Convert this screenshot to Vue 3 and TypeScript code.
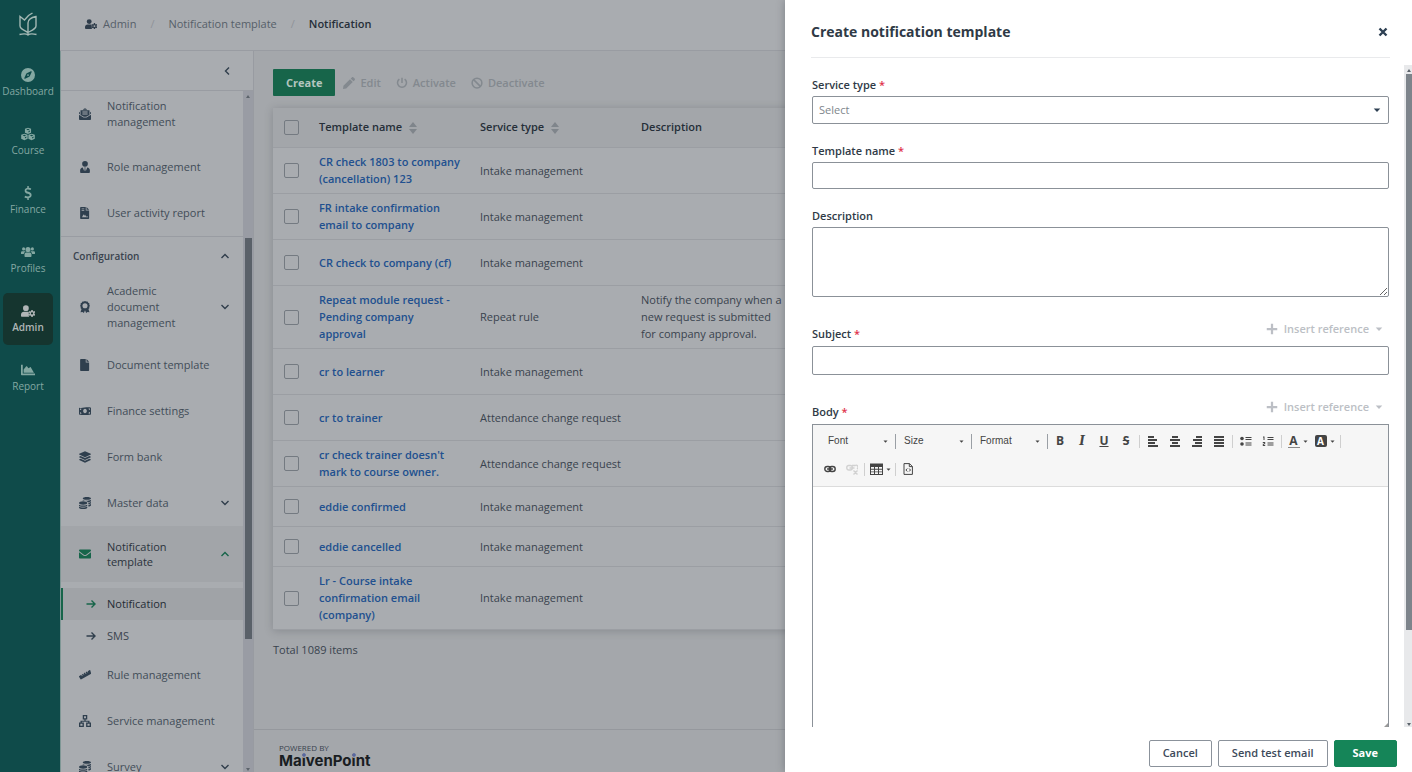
<script setup lang="ts">
import { ref } from 'vue'

interface NavItem {
  label: string
  icon: string
  chevron?: 'up' | 'down'
  kind?: string
}

const icons: Record<string, string> = {
  compass:
    'M8 0a8 8 0 1 0 0 16A8 8 0 0 0 8 0zM12.2 4.7 10 9.4a1.2 1.2 0 0 1-.6.6l-4.7 2.2c-.6.2-1.1-.3-.9-.9L6 6.600a1.200 1.200 0 0 1 .6-.6l4.700-2.200c.6-.2 1.100.3.9.9zM8 7a1 1 0 1 0 0 2 1 1 0 0 0 0-2z',
  cubes:
    'M8 .8 11.500 2v4.500L8 8 4.500 6.500V2zM8 2 6 2.800l2 .8 2-.8zM8.600 4.700v1.500l1.500-.7V4zM3.900 7.600l3.700 1.300v4.500l-3.700 1.700L.2 13.400V8.900zM3.900 8.900l-2 .8 2 .8 2-.8zM4.500 11.600v1.500l1.600-.7v-1.500zM12.100 7.600l3.700 1.300v4.500l-3.700 1.700-3.700-1.700V8.900zM12.100 8.900l-2 .8 2 .8 2-.8zM12.700 11.600v1.500l1.600-.7v-1.500z',
  dollar:
    'M7.200 0h1.700v2c1 .1 2 .4 2.800.8l-.7 1.900c-1-.5-2-.8-3-.8-1.200 0-1.800.4-1.800 1.100 0 .8.8 1.100 2.300 1.600 2.200.7 3.600 1.600 3.600 3.600 0 1.900-1.200 3.200-3.200 3.600V16H7.200v-2.100c-1.200-.1-2.400-.4-3.300-.9l.8-2c1 .6 2.200.9 3.300.9 1.300 0 2-.5 2-1.300 0-.8-.7-1.200-2.200-1.700C5.700 8.200 4.200 7.300 4.200 5.300c0-1.700 1.200-2.900 3-3.300z',
  users:
    'M3 2.700a1.800 1.800 0 1 1 0 3.600 1.800 1.800 0 0 1 0-3.600zM13 2.700a1.800 1.800 0 1 1 0 3.600 1.800 1.800 0 0 1 0-3.600zM8 2.200a2.900 2.900 0 1 1 0 5.800 2.900 2.900 0 0 1 0-5.800zM1.500 7h2.700c.5 0 .9.2 1.100.5-1.200.7-1.900 1.500-2.100 2.900H.6a.6.6 0 0 1-.6-.6V8.500C0 7.600.7 7 1.500 7zM11.800 7h2.700c.8 0 1.500.6 1.500 1.500v1.300c0 .4-.3.6-.6.6h-2.600c-.2-1.400-.9-2.200-2.100-2.900.2-.3.600-.5 1.100-.5zM6 8.600h4c1.200 0 2 1.100 2 2.300v1.600c0 .7-.5 1.200-1.200 1.200H5.200c-.7 0-1.200-.5-1.200-1.200v-1.600c0-1.200.8-2.300 2-2.300z',
  userCog:
    'M5.600 1.500a3.300 3.300 0 1 1 0 6.600 3.300 3.300 0 0 1 0-6.600zM3.400 8.800h4.200c.6 0 1 .1 1.400.3-.5.9-.4 1.700.2 2.400-.5.9-.4 1.900.2 3H1.200c-.7 0-1.200-.5-1.200-1.200v-1.100c0-1.900 1.500-3.400 3.400-3.400zM11.800 6.800h1.600l.2 1.200.8.500 1.200-.4.8 1.400-1 .8v1l1 .8-.8 1.400-1.200-.4-.8.500-.2 1.200h-1.600l-.2-1.200-.8-.5-1.200.4-.8-1.400 1-.8v-1l-1-.8.8-1.400 1.200.4.8-.5zM12.600 9.500a1.300 1.300 0 1 0 0 2.600 1.300 1.300 0 0 0 0-2.600z',
  chart:
    'M0 2h2v10h14v2H.8a.8.8 0 0 1-.8-.8zM3 11V7.500l3-3.700c.2-.3.600-.3.800 0L8.500 6l2-1.200c.3-.2.600-.1.800.2L14.800 11z',
  mailOpen:
    'M5 2.200 7 .5h2l2 1.700zM2 3h12v6.200L9.500 11.800h-3L2 9.200zM4.500 4.700V6h7V4.700zM4.500 7.300v1.300h7V7.300zM1.200 5v3.300L0 7.600V6zM14.800 5v3.300l1.200-.7V6zM0 9l6 3.700h4L16 9v5.500c0 .8-.7 1.500-1.500 1.500h-13C.7 16 0 15.300 0 14.500z',
  userTie:
    'M8 0a3.800 3.800 0 1 1 0 7.600A3.800 3.800 0 0 1 8 0zM5 8.500l2 5L7.700 10 7 8.500h2L8.300 10l.7 3.500 2-5c2 .2 3.500 1.700 3.500 3.700v2.300c0 .8-.6 1.500-1.500 1.500H3c-.8 0-1.500-.7-1.500-1.500v-2.300c0-2 1.500-3.500 3.500-3.700z',
  report:
    'M2.500 0H9v4.500h4.500V15c0 .6-.4 1-1 1h-10a1 1 0 0 1-1-1V1c0-.6.4-1 1-1zM10 0l3.500 3.500H10zM3.500 2v1H7V2zM3.500 4v1H7V4zM4 13.500h8v-1H9.500L8 10l-1 1.500-1-2z',
  award:
    'M8 0l1.600.8 1.800-.1.900 1.500 1.500.9-.1 1.700.8 1.600-.8 1.600.1 1.700-1.200.8L14 15l-2.700-.4L9.500 16 8 12.300 6.500 16l-1.800-1.400L2 15l1.400-4.500-1.200-.8.100-1.700-.8-1.600.8-1.600-.1-1.700 1.500-.9.900-1.500 1.800.1zM8 3a3.400 3.400 0 1 0 0 6.800A3.400 3.400 0 0 0 8 3z',
  file: 'M2.500 0H9v4.500h4.500V15c0 .6-.4 1-1 1h-10a1 1 0 0 1-1-1V1c0-.6.4-1 1-1zM10 0l3.500 3.500H10z',
  money:
    'M0 3.500c4 1.500 10-1.500 16 0v9c-5 1-12 1-16 0zM8 5c-1.400 0-2.500 1.400-2.500 3S6.600 11 8 11s2.500-1.400 2.500-3S9.400 5 8 5zM1.300 4.800v2c1 0 2-.8 2-1.800zM14.700 4.500v2c-1 0-2-.8-2-1.800zM1.300 11.800V9.600c1 0 2 .8 2 1.900zM14.700 11.500V9.300c-1 0-2 .8-2 1.900z',
  layers:
    'M8 .3l7.700 3.500c.4.200.4.700 0 .9L8 8.200.3 4.700c-.4-.2-.4-.7 0-.9zM2 6.700l6 2.700 6-2.700 1.700.8c.4.200.4.700 0 .9L8 11.900.3 8.400c-.4-.2-.4-.7 0-.9zM2 10.400l6 2.700 6-2.700 1.700.8c.4.200.4.700 0 .9L8 15.700.3 12.100c-.4-.2-.4-.7 0-.9z',
  coins:
    'M10.500 0C13.500 0 16 .8 16 1.900s-2.500 1.900-5.500 1.900S5 3 5 1.900 7.500 0 10.500 0zM5 4c2 1.300 8 1.300 11 0v1.300c0 .8-1.600 1.500-4 1.700C10.500 5.400 8 4.800 5 5zM5.500 5.800c3 0 5.500 1 5.500 2.300s-2.500 2.300-5.500 2.300S0 9.400 0 8.100s2.500-2.300 5.500-2.300zM0 10.200c2 1.500 8.500 1.500 11 0v1.300c0 .9-2.500 1.600-5.500 1.600S0 12.400 0 11.500zM0 13c2 1.400 8.500 1.400 11 0v1.200c0 1-2.500 1.800-5.500 1.800S0 15.200 0 14.200zM12.500 7.700C14 7.500 15 7.200 16 6.600v1.500c0 .7-1.300 1.300-3.500 1.600zM12.500 10.500c1.500-.2 2.500-.5 3.500-1.100v1.500c0 .8-1.300 1.500-3.500 1.800z',
  mail: 'M1.500 2h13c.8 0 1.500.7 1.500 1.500v.6L9.500 9c-.9.700-2.100.7-3 0L0 4.100v-.6C0 2.700.7 2 1.500 2zM0 5.600l5.700 4.300c1.400 1 3.200 1 4.600 0L16 5.600v6.900c0 .8-.7 1.500-1.500 1.500h-13C.7 14 0 13.300 0 12.500z',
  ruler:
    'M0 9.500l3-1.700 1 1.700.8-.5-1-1.700 1.700-1 .8 1.300.8-.4-.8-1.400 1.700-1 1 1.700.9-.5-1-1.700 1.700-1 .8 1.400.9-.5-.8-1.300 2.400-1.400c.4-.2.900-.1 1.100.3L16 5.400c.2.400.1.900-.3 1.100L3.200 13.800c-.4.200-.9.100-1.100-.3L0 10.300z',
  sitemap:
    'M5 0h6v6H8.800v1.500H14V10h2v6H9.500v-6h2.700V9H3.800v1h2.700v6H0v-6h2V7.500h5.200V6H5zM6.700 1.700v2.600h2.600V1.700zM1.800 11.700v2.600h2.900v-2.600zM11.300 11.700v2.600h2.900v-2.600z',
  pencil:
    'M0 16l.6-4.300L9.300 3l3.700 3.700-8.700 8.700zM10.200 2.100 11.800.5c.6-.6 1.500-.6 2.100 0l1.600 1.600c.6.6.6 1.500 0 2.100l-1.600 1.600z',
  plus: 'M6.500 1h3v5.500H15v3H9.500V15h-3V9.500H1v-3h5.500z',
  caret: 'M1.500 5h13L8 12z',
}

const rail = [
  { label: 'Dashboard', icon: 'compass' },
  { label: 'Course', icon: 'cubes' },
  { label: 'Finance', icon: 'dollar' },
  { label: 'Profiles', icon: 'users' },
  { label: 'Admin', icon: 'userCog' },
  { label: 'Report', icon: 'chart' },
]

const topNav: NavItem[] = [
  { label: 'Notification management', icon: 'mailOpen', kind: 'first' },
  { label: 'Role management', icon: 'userTie' },
  { label: 'User activity report', icon: 'report' },
]

const configNav: NavItem[] = [
  { label: 'Academic document management', icon: 'award', chevron: 'down', kind: 'tall' },
  { label: 'Document template', icon: 'file' },
  { label: 'Finance settings', icon: 'money' },
  { label: 'Form bank', icon: 'layers' },
  { label: 'Master data', icon: 'coins', chevron: 'down' },
  { label: 'Notification template', icon: 'mail', chevron: 'up', kind: 'open' },
]

const lowerNav: NavItem[] = [
  { label: 'Rule management', icon: 'ruler' },
  { label: 'Service management', icon: 'sitemap' },
  { label: 'Survey', icon: 'coins', chevron: 'down' },
]

const rows = [
  { name: 'CR check 1803 to company (cancellation) 123', type: 'Intake management', desc: '' },
  { name: 'FR intake confirmation email to company', type: 'Intake management', desc: '' },
  { name: 'CR check to company (cf)', type: 'Intake management', desc: '' },
  {
    name: 'Repeat module request - Pending company approval',
    type: 'Repeat rule',
    desc: 'Notify the company when a new request is submitted for company approval.',
  },
  { name: 'cr to learner', type: 'Intake management', desc: '' },
  { name: 'cr to trainer', type: 'Attendance change request', desc: '' },
  { name: "cr check trainer doesn't mark to course owner.", type: 'Attendance change request', desc: '' },
  { name: 'eddie confirmed', type: 'Intake management', desc: '', short: true },
  { name: 'eddie cancelled', type: 'Intake management', desc: '', short: true },
  { name: 'Lr - Course intake confirmation email (company)', type: 'Intake management', desc: '' },
]

const combos = ['Font', 'Size', 'Format']
const aligns = [
  { label: 'Align left', d: 'M1 1h6v2H1zM1 4h9v2H1zM1 7h7v2H1zM1 10h10v2H1z' },
  { label: 'Center', d: 'M3 1h6v2H3zM1 4h10v2H1zM3 7h6v2H3zM1 10h10v2H1z' },
  { label: 'Align right', d: 'M5 1h6v2H5zM2 4h9v2H2zM4 7h7v2H4zM1 10h10v2H1z' },
  { label: 'Justify', d: 'M1 1h10v2H1zM1 4h10v2H1zM1 7h10v2H1zM1 10h10v2H1z' },
]

const templateName = ref('')
const description = ref('')
const subject = ref('')
const body = ref('')
</script>

<template>
  <div class="app">
    <nav class="rail" aria-label="Modules">
      <svg class="brand" viewBox="0 0 20 24" aria-hidden="true">
        <path d="M10 22.500V11c0-3 3-5.500 8-6.500V14c0 2.500-2.500 3.500-8 6.500M10 20.500c-5-2.500-8-4-8-6.500V4.500l4.500 3.500 4-4.500L14.500 1M1.500 22.500c4-1 7-.8 8.500.5 1.500-1.300 4.500-1.500 8.500-.5" />
      </svg>
      <a v-for="r in rail" :key="r.label" href="#" class="tile" :class="{ on: r.label === 'Admin' }">
        <svg viewBox="0 0 16 16" aria-hidden="true"><path :d="icons[r.icon]" fill-rule="evenodd" /></svg>
        <span>{{ r.label }}</span>
      </a>
    </nav>

    <div class="page">
      <header class="crumbs">
        <a href="#" class="crumb">
          <svg viewBox="0 0 16 16" aria-hidden="true"><path :d="icons.userCog" fill-rule="evenodd" /></svg>Admin
        </a>
        <span class="slash">/</span>
        <a href="#" class="crumb">Notification template</a>
        <span class="slash">/</span>
        <b>Notification</b>
      </header>

      <div class="columns">
        <aside class="side">
          <div class="side-head">
            <button type="button" class="bare" aria-label="Collapse menu">
              <svg class="chev left" viewBox="0 0 10 10"><path d="M1.500 3 5 6.500 8.500 3" /></svg>
            </button>
          </div>
          <div class="side-body">
            <nav class="menu" aria-label="Admin menu">
              <a v-for="n in topNav" :key="n.label" href="#" class="item" :class="n.kind">
                <svg class="ico" viewBox="0 0 16 16"><path :d="icons[n.icon]" fill-rule="evenodd" /></svg>
                <span>{{ n.label }}</span>
              </a>
              <button type="button" class="group">
                <span>Configuration</span>
                <svg class="chev up" viewBox="0 0 10 10"><path d="M1.500 3 5 6.500 8.500 3" /></svg>
              </button>
              <a v-for="n in configNav" :key="n.label" href="#" class="item" :class="n.kind">
                <svg class="ico" viewBox="0 0 16 16"><path :d="icons[n.icon]" fill-rule="evenodd" /></svg>
                <span>{{ n.label }}</span>
                <svg v-if="n.chevron" class="chev" :class="n.chevron" viewBox="0 0 10 10"><path d="M1.500 3 5 6.500 8.500 3" /></svg>
              </a>
              <div class="subs">
                <a v-for="s in ['Notification', 'SMS']" :key="s" href="#" class="sub" :class="{ on: s === 'Notification' }">
                  <svg viewBox="0 0 10 10"><path d="M.5 5h8.500M5.500 1.500 9 5 5.500 8.500" /></svg>{{ s }}
                </a>
              </div>
              <a v-for="n in lowerNav" :key="n.label" href="#" class="item">
                <svg class="ico" viewBox="0 0 16 16"><path :d="icons[n.icon]" fill-rule="evenodd" /></svg>
                <span>{{ n.label }}</span>
                <svg v-if="n.chevron" class="chev" :class="n.chevron" viewBox="0 0 10 10"><path d="M1.500 3 5 6.500 8.500 3" /></svg>
              </a>
            </nav>
            <div class="track" aria-hidden="true">
              <i class="arrow up"></i>
              <i class="thumb"></i>
              <i class="arrow down"></i>
            </div>
          </div>
        </aside>

        <main class="main">
          <div class="content">
            <div class="actions">
              <button type="button" class="create">Create</button>
              <button type="button" class="ghost" disabled>
                <svg viewBox="0 0 16 16"><path :d="icons.pencil" /></svg>Edit
              </button>
              <button type="button" class="ghost" disabled>
                <svg class="line" viewBox="0 0 16 16"><path d="M8 1v7M4.500 2.800a6 6 0 1 0 7 0" /></svg>Activate
              </button>
              <button type="button" class="ghost" disabled>
                <svg class="line" viewBox="0 0 16 16"><circle cx="8" cy="8" r="6.500" /><path d="M3.500 3.500l9 9" /></svg>Deactivate
              </button>
            </div>

            <table class="grid">
              <colgroup>
                <col class="c-check" />
                <col class="c-text" />
                <col class="c-text" />
                <col class="c-text" />
                <col />
              </colgroup>
              <thead>
                <tr>
                  <th class="pick"><input type="checkbox" aria-label="Select all" /></th>
                  <th>
                    Template name
                    <svg class="sort" viewBox="0 0 8 12"><path d="M0 5h8L4 0zM0 7h8l-4 5z" /></svg>
                  </th>
                  <th>
                    Service type
                    <svg class="sort" viewBox="0 0 8 12"><path d="M0 5h8L4 0zM0 7h8l-4 5z" /></svg>
                  </th>
                  <th>Description</th>
                  <th></th>
                </tr>
              </thead>
              <tbody>
                <tr v-for="r in rows" :key="r.name" :class="{ short: r.short }">
                  <td class="pick"><input type="checkbox" :aria-label="r.name" /></td>
                  <td><a href="#">{{ r.name }}</a></td>
                  <td>{{ r.type }}</td>
                  <td>{{ r.desc }}</td>
                  <td></td>
                </tr>
              </tbody>
            </table>
            <p class="total">Total 1089 items</p>
          </div>
          <footer class="foot">
            <small>POWERED BY</small>
            <strong>Ma<span>i</span>venPo<span>i</span>nt</strong>
          </footer>
        </main>
      </div>
    </div>

    <section class="drawer" role="dialog" aria-labelledby="dlg-title">
      <header class="d-head">
        <h1 id="dlg-title">Create notification template</h1>
        <button type="button" class="bare" aria-label="Close">
          <svg class="close" viewBox="0 0 10 10"><path d="M1.500 1.500l7 7M8.500 1.500l-7 7" /></svg>
        </button>
      </header>

      <div class="d-body">
        <form class="form">
          <div class="field">
            <label for="f-type">Service type <em>*</em></label>
            <div class="select">
              <select id="f-type"><option>Select</option></select>
              <svg viewBox="0 0 16 16"><path :d="icons.caret" /></svg>
            </div>
          </div>
          <div class="field">
            <label for="f-name">Template name <em>*</em></label>
            <input id="f-name" v-model="templateName" type="text" />
          </div>
          <div class="field">
            <label for="f-desc">Description</label>
            <textarea id="f-desc" v-model="description" class="desc"></textarea>
          </div>
          <div class="field wide">
            <div class="pair">
              <label for="f-subject">Subject <em>*</em></label>
              <button type="button" class="insert" disabled>
                <svg class="plus" viewBox="0 0 16 16"><path :d="icons.plus" /></svg>Insert reference
                <svg class="tri" viewBox="0 0 16 16"><path :d="icons.caret" /></svg>
              </button>
            </div>
            <input id="f-subject" v-model="subject" class="big" type="text" />
          </div>
          <div class="field wide grow">
            <div class="pair">
              <label for="f-body">Body <em>*</em></label>
              <button type="button" class="insert" disabled>
                <svg class="plus" viewBox="0 0 16 16"><path :d="icons.plus" /></svg>Insert reference
                <svg class="tri" viewBox="0 0 16 16"><path :d="icons.caret" /></svg>
              </button>
            </div>
            <div class="editor">
              <div class="tools" role="toolbar" aria-label="Formatting">
                <div class="tool-row">
                  <div v-for="c in combos" :key="c" class="combo">
                    <select :aria-label="c"><option>{{ c }}</option></select>
                    <svg class="drop" viewBox="0 0 16 16"><path :d="icons.caret" /></svg>
                  </div>
                  <button type="button" class="tb bold">B</button>
                  <button type="button" class="tb ital">I</button>
                  <button type="button" class="tb under">U</button>
                  <button type="button" class="tb strike">S</button>
                  <i class="sep"></i>
                  <button v-for="a in aligns" :key="a.label" type="button" class="tb" :aria-label="a.label">
                    <svg class="al" viewBox="0 0 12 13"><path :d="a.d" /></svg>
                  </button>
                  <i class="sep"></i>
                  <button type="button" class="tb" aria-label="Bulleted list">
                    <svg viewBox="0 0 12 12"><circle cx="2" cy="3.500" r="1.800" /><circle cx="2" cy="9" r="1.800" /><path d="M5.500 2h6v1h-6zM5.500 4h6v1h-6zM5.500 7.500h6v1h-6zM5.500 9.500h6v1h-6z" /></svg>
                  </button>
                  <button type="button" class="tb" aria-label="Numbered list">
                    <svg viewBox="0 0 12 12"><path d="M1 1.500h1.500V5h-1V2.500H1zM.8 7h2.400v2.300H1.800v.7h1.400v1H.8V8.700h1.400V8H.8zM5.500 2h6v1h-6zM5.500 4h6v1h-6zM5.500 7.500h6v1h-6zM5.500 9.500h6v1h-6z" /></svg>
                  </button>
                  <i class="sep"></i>
                  <button type="button" class="tb with-drop" aria-label="Text colour">
                    <span class="tcol">A</span>
                    <svg class="drop" viewBox="0 0 16 16"><path :d="icons.caret" /></svg>
                  </button>
                  <button type="button" class="tb with-drop" aria-label="Background colour">
                    <span class="bcol">A</span>
                    <svg class="drop" viewBox="0 0 16 16"><path :d="icons.caret" /></svg>
                  </button>
                  <i class="sep"></i>
                </div>
                <div class="tool-row second">
                  <button type="button" class="tb" aria-label="Link">
                    <svg class="stroke thick" viewBox="0 0 12 12"><rect x=".8" y="3.500" width="6" height="5" rx="2.500" /><rect x="5.200" y="3.500" width="6" height="5" rx="2.500" /><path d="M3 6h6" /></svg>
                  </button>
                  <button type="button" class="tb" aria-label="Unlink" disabled>
                    <svg class="stroke thick" viewBox="0 0 12 12"><rect x=".8" y="2.500" width="5.500" height="4.500" rx="2" /><path d="M6 2.500h3a2 2 0 0 1 2 3.500M3.500 5h5M7.500 7.500l4 4M11.500 7.500l-4 4" /></svg>
                  </button>
                  <i class="sep"></i>
                  <button type="button" class="tb with-drop" aria-label="Table">
                    <svg class="table" viewBox="0 0 13 12"><path fill-rule="evenodd" d="M0 .5h13V12H0zM1 4v1.800h3V4zM5 4v1.800h3V4zM9 4v1.800h3V4zM1 6.700v1.700h3V6.700zM5 6.700v1.700h3V6.700zM9 6.700v1.700h3V6.700zM1 9.300V11h3V9.300zM5 9.300V11h3V9.300zM9 9.300V11h3V9.300z" /></svg>
                    <svg class="drop" viewBox="0 0 16 16"><path :d="icons.caret" /></svg>
                  </button>
                  <i class="sep"></i>
                  <button type="button" class="tb" aria-label="Source">
                    <svg class="stroke" viewBox="0 0 12 12"><path d="M2 .6h5.500L10.400 3.500v7.900H2zM7.300.6v3h3M5.300 5.500 3.900 7l1.400 1.500M7.100 5.500 8.500 7 7.100 8.500" /></svg>
                  </button>
                </div>
              </div>
              <textarea id="f-body" v-model="body" class="canvas"></textarea>
              <i class="grip"></i>
            </div>
          </div>
        </form>
        <div class="track light" aria-hidden="true">
          <i class="arrow up"></i>
          <i class="thumb"></i>
          <i class="arrow down"></i>
        </div>
      </div>

      <footer class="d-foot">
        <button type="button">Cancel</button>
        <button type="button">Send test email</button>
        <button type="button" class="save">Save</button>
      </footer>
    </section>
  </div>
</template>

<style>
body {
  margin: 0;
  overflow: hidden;
}
</style>

<style scoped>
* {
  box-sizing: border-box;
}
.app {
  position: relative;
  display: flex;
  height: 100vh;
  overflow: hidden;
  background: #a4a7ab;
  color: #39434e;
  font: 11px/16px 'Open Sans', 'Noto Sans', sans-serif;
}
a {
  color: inherit;
  text-decoration: none;
}
button,
input,
select,
textarea {
  font: inherit;
  color: inherit;
  margin: 0;
}
svg {
  fill: currentColor;
  flex: none;
}
.bare {
  border: 0;
  background: none;
  padding: 0;
  display: flex;
}
.chev {
  width: 10px;
  height: 10px;
  fill: none;
  stroke: #303e4c;
  stroke-width: 1.400;
}
.chev.up {
  transform: rotate(180deg);
}
.chev.left {
  transform: rotate(90deg);
}

/* module rail */
.rail {
  width: 60px;
  flex: none;
  background: #0f4b4a;
  color: #84a8a2;
  display: flex;
  flex-direction: column;
  gap: 7px;
  padding: 12px 7px 0 3px;
}
.brand {
  width: 20px;
  height: 24px;
  margin: 0 auto 14px;
  fill: none;
  stroke: #a3b8b4;
  stroke-width: 1.400;
}
.tile {
  width: 50px;
  height: 52px;
  border-radius: 5px;
  display: flex;
  flex-direction: column;
  align-items: center;
  justify-content: center;
  gap: 2px;
  font-size: 10px;
  line-height: 14px;
}
.tile svg {
  width: 14px;
  height: 14px;
}
.tile.on {
  background: #15352f;
  color: #b0b5b6;
  font-weight: 600;
}

/* page */
.page {
  flex: 1;
  min-width: 0;
  display: flex;
  flex-direction: column;
}
.crumbs {
  height: 51px;
  flex: none;
  display: flex;
  align-items: center;
  padding: 0 0 3px 25px;
  background: #a9acb0;
  border-bottom: 1px solid #999ca2;
  color: #565f69;
}
.crumb {
  display: flex;
  align-items: center;
  gap: 6px;
}
.crumb svg {
  width: 12px;
  height: 12px;
  color: #2f3d4b;
}
.slash {
  width: 32px;
  text-align: center;
  color: #8f9399;
}
.crumbs b {
  font-weight: 600;
  color: #262f39;
}
.columns {
  flex: 1;
  min-height: 0;
  display: flex;
}

/* side menu */
.side {
  width: 194px;
  flex: none;
  display: flex;
  flex-direction: column;
  background: #a9acb0;
  border-left: 1px solid #7e9795;
  border-right: 1px solid #989ba1;
}
.side-head {
  height: 40px;
  flex: none;
  display: flex;
  align-items: center;
  justify-content: flex-end;
  padding-right: 21px;
  border-bottom: 1px solid #999ca2;
}
.side-body {
  flex: 1;
  min-height: 0;
  display: flex;
}
.menu {
  flex: 1;
  overflow: hidden;
}
.item {
  display: flex;
  align-items: center;
  height: 46px;
  padding: 0 13px 0 18px;
  color: #424d58;
}
.item span {
  flex: 1;
  margin: 0 8px 0 16px;
}
.ico {
  width: 12px;
  height: 12px;
  color: #2f3f4e;
}
.item.first {
  margin-bottom: 7px;
}
.item.first span {
  padding-right: 30px;
}
.item.tall {
  height: 70px;
}
.item.tall span {
  padding-right: 20px;
}
.item.open {
  height: 56px;
  background: #a2a5a9;
  color: #2b333c;
  line-height: 15px;
}
.item.open .ico {
  color: #17654a;
}
.item.open .chev {
  stroke: #17654a;
}
.group {
  width: 100%;
  height: 36px;
  display: flex;
  align-items: center;
  justify-content: space-between;
  padding: 2px 13px 0 12px;
  border: 0;
  border-top: 1px solid #999ca2;
  background: none;
  font-size: 10px;
  font-weight: 600;
}
.subs {
  padding-top: 6px;
}
.sub {
  height: 32px;
  display: flex;
  align-items: center;
  gap: 11px;
  padding-left: 23px;
  border-left: 2px solid transparent;
}
.sub svg {
  width: 10px;
  height: 10px;
  fill: none;
  stroke: #303e4c;
  stroke-width: 1.400;
}
.sub.on {
  background: #a0a3a7;
  border-color: #17654a;
  color: #242c35;
}
.sub.on svg {
  stroke: #17654a;
}
.track {
  width: 10px;
  flex: none;
  display: flex;
  flex-direction: column;
  align-items: center;
  justify-content: space-between;
  background: #999ca4;
}
.arrow {
  width: 0;
  height: 0;
  margin: 4px 0;
  border: 2px solid transparent;
}
.arrow.up {
  border-top: 0;
  border-bottom: 3px solid #5c636b;
}
.arrow.down {
  border-bottom: 0;
  border-top: 3px solid #5c636b;
  margin-bottom: 1px;
}
.thumb {
  width: 7px;
  height: 59%;
  background: #5a6169;
}
.side .thumb {
  margin-bottom: -11px;
}

/* list */
.main {
  flex: 1;
  min-width: 0;
  display: flex;
  flex-direction: column;
}
.content {
  flex: 1;
  min-height: 0;
  padding: 18px 19px 0;
}
.actions {
  display: flex;
  align-items: center;
  gap: 15px;
  margin-bottom: 12px;
}
.create {
  height: 27px;
  padding: 0 13px;
  margin-right: -7px;
  border: 0;
  border-radius: 1px;
  background: #17654a;
  color: #b3c5bf;
  font-weight: 700;
}
.ghost {
  display: flex;
  align-items: center;
  gap: 5px;
  padding: 0;
  border: 0;
  background: none;
  color: #83898f;
  font-weight: 600;
}
.ghost svg {
  width: 12px;
  height: 12px;
}
.ghost .line,
.stroke {
  fill: none;
  stroke: currentColor;
}
.ghost .line {
  stroke-width: 2;
}
.grid {
  width: 100%;
  table-layout: fixed;
  border-spacing: 0;
  background: #a9acb0;
  box-shadow: 0 1px 8px rgba(50, 55, 65, 0.25);
  line-height: 17px;
}
.c-check {
  width: 37px;
}
.c-text {
  width: 161px;
}
th,
td {
  padding: 5px 9px 6px;
  text-align: left;
  border-bottom: 1px solid #9b9ea3;
}
th {
  height: 40px;
  padding-top: 3px;
  background: #a3a6aa;
  font-weight: 600;
  color: #252e38;
}
td {
  height: 46px;
}
.short td {
  height: 40px;
}
td a {
  color: #21508f;
  font-weight: 600;
}
.pick {
  padding: 0 0 0 11px;
}
.pick input {
  appearance: none;
  display: block;
  width: 15px;
  height: 15px;
  border: 1px solid #747a81;
  border-radius: 2px;
}
.sort {
  width: 8px;
  height: 12px;
  margin-left: 4px;
  vertical-align: -3px;
  color: #7f858b;
}
.total {
  margin: 12px 0 0;
}
.foot {
  height: 43px;
  flex: none;
  display: flex;
  flex-direction: column;
  padding: 13px 25px 0;
  border-top: 1px solid #95989d;
}
.foot small {
  font-size: 8px;
  line-height: 10px;
}
.foot strong {
  font: 700 15px/16px Inter, sans-serif;
  color: #191d22;
}
.foot strong span {
  position: relative;
}
.foot strong span::before {
  content: '';
  position: absolute;
  top: 2px;
  left: 0;
  width: 4px;
  height: 4px;
  background: #5867a0;
  outline: 1px solid #a4a7ab;
  border-radius: 2px;
}

/* drawer */
.drawer {
  position: absolute;
  inset: 0 0 0 auto;
  width: min(627px, 100%);
  display: flex;
  flex-direction: column;
  background: #fff;
  box-shadow: 0 0 8px rgba(40, 45, 55, 0.35);
  color: #2f3a46;
}
.d-head {
  height: 58px;
  flex: none;
  display: flex;
  align-items: center;
  justify-content: space-between;
  margin: 0 22px 7px 26px;
  padding: 6px 2px 0 0;
  border-bottom: 1px solid #e9eaec;
}
h1 {
  margin: 0;
  font-size: 14px;
  line-height: 20px;
  font-weight: 700;
}
.close {
  width: 10px;
  height: 10px;
  stroke: #2e4053;
  stroke-width: 2.400;
}
.d-body {
  flex: 1;
  min-height: 0;
  display: flex;
}
.form {
  flex: 1;
  min-width: 0;
  display: flex;
  flex-direction: column;
  gap: 19px;
  padding: 12px 15px 0 27px;
}
.field {
  display: flex;
  flex-direction: column;
  gap: 3px;
}
.wide {
  gap: 4px;
  margin-top: 5px;
}
.grow {
  flex: 1;
  min-height: 0;
}
label {
  font-weight: 600;
}
em {
  font-style: normal;
  color: #e0344b;
}
.field > input,
.select select,
.desc {
  width: 100%;
  height: 27px;
  padding: 0 6px;
  border: 1px solid #8b9198;
  border-radius: 2px;
  background: #fff;
}
.field > .big {
  height: 29px;
}
.select {
  display: flex;
  align-items: center;
}
.select select {
  height: 28px;
  appearance: none;
  color: #80868c;
}
.select svg {
  width: 8px;
  height: 8px;
  margin-left: -16px;
  color: #2e4053;
  pointer-events: none;
}
.field > .desc {
  height: 70px;
  resize: vertical;
}
.pair {
  display: flex;
  justify-content: space-between;
  height: 21px;
}
.pair label {
  align-self: flex-end;
}
.insert {
  align-self: flex-start;
  display: flex;
  align-items: center;
  gap: 6px;
  padding: 0 6px 0 0;
  border: 0;
  background: none;
  color: #bcbfc5;
  font-weight: 600;
}
.plus {
  width: 12px;
  height: 12px;
}
.tri {
  width: 8px;
  height: 8px;
}
.editor {
  position: relative;
  flex: 1;
  min-height: 0;
  display: flex;
  flex-direction: column;
  border: 1px solid #8b9198;
  border-bottom: 0;
}
.tools {
  padding: 2px 7px 3px;
  background: #f6f6f6;
  border-bottom: 1px solid #dcdcdc;
  color: #444;
}
.tool-row {
  display: flex;
  align-items: center;
  height: 28px;
}
.second {
  margin-left: -1px;
}
.combo {
  width: 76px;
  height: 15px;
  display: flex;
  align-items: center;
  border-right: 1px solid #9a9fa5;
}
.combo + .tb {
  margin-left: 1px;
}
.combo select {
  width: 75px;
  appearance: none;
  padding: 0 0 0 8px;
  border: 0;
  background: none;
  font: 10px/14px 'Liberation Sans', Arial, sans-serif;
}
.combo .drop {
  margin-left: -12px;
}
.drop {
  width: 5px;
  height: 5px;
  pointer-events: none;
}
.tb {
  width: 22px;
  height: 22px;
  padding: 0;
  display: flex;
  align-items: center;
  justify-content: center;
  border: 0;
  background: none;
  font: 700 12px/14px 'Open Sans', sans-serif;
}
.tb svg {
  width: 12px;
  height: 12px;
}
.tb .al {
  height: 13px;
}
.tb .table {
  width: 13px;
}
.tb .drop {
  width: 5px;
  height: 5px;
}
.tb:disabled {
  opacity: 0.2;
}
.thick {
  stroke-width: 1.400;
}
.ital {
  font-family: 'DejaVu Serif', serif;
  font-style: italic;
}
.under {
  text-decoration: underline;
}
.strike {
  text-decoration: line-through;
}
.sep {
  width: 1px;
  height: 13px;
  margin: 0 2px;
  background: #cfcfcf;
}
.second .sep {
  margin: 0 1px;
}
.with-drop {
  width: 27px;
  gap: 3px;
}
.second .with-drop {
  width: 28px;
}
.tcol {
  width: 12px;
  border-bottom: 1px solid #888;
  line-height: 12px;
}
.bcol {
  width: 12px;
  border-radius: 2px;
  background: #444;
  color: #fff;
  font-size: 10px;
  line-height: 12px;
}
.canvas {
  flex: 1;
  border: 0;
  padding: 8px;
  resize: none;
  outline: 0;
}
.grip {
  position: absolute;
  right: 0;
  bottom: 0;
  border: 2px solid #999;
  border-left-color: transparent;
  border-top-color: transparent;
}
.track.light {
  width: 8px;
  background: #e8e9eb;
  align-items: flex-end;
}
.light .thumb {
  flex: none;
  width: 6px;
  height: 84%;
  margin: -2px 0 auto;
  background: #7d848b;
}
.light .arrow {
  margin-left: 2px;
  margin-right: 1px;
}
.d-foot {
  height: 45px;
  flex: none;
  display: flex;
  align-items: center;
  justify-content: flex-end;
  gap: 6px;
  padding: 7px 15px 0 0;
}
.d-foot button {
  height: 27px;
  padding: 0 13px;
  border: 1px solid #8b929b;
  border-radius: 2px;
  background: #fff;
  color: #3d4a5a;
  font-weight: 600;
}
.d-foot .save {
  padding: 0 18px;
  border-color: #158558;
  background: #158558;
  color: #fff;
  font-weight: 700;
}
</style>
